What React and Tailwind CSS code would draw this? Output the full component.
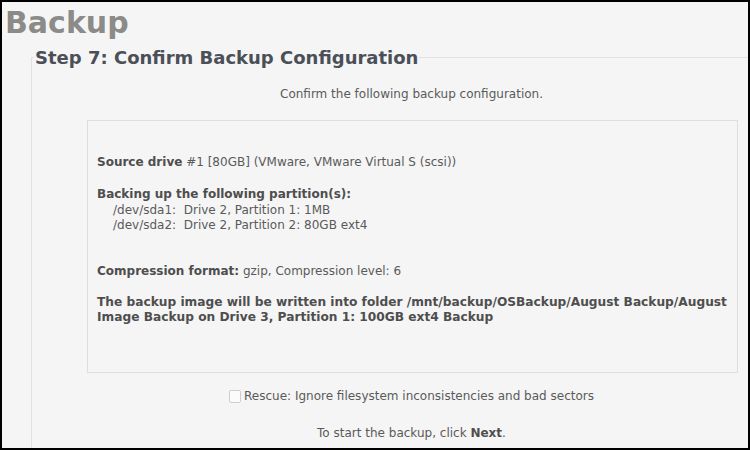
export default function App() {
  const font = { fontFamily: '"DejaVu Sans", Verdana, sans-serif' };
  return (
    <div
      style={font}
      className="w-[750px] h-[450px] overflow-hidden border-2 border-black bg-[#f5f5f5] text-[12px] leading-[15.5px] text-[#5a5a5a]"
    >
      <h1 className="mt-[6px] pl-[3px] text-[30px] leading-[30px] font-bold text-[#8b8b88]">Backup</h1>

      <fieldset className="mt-[11.5px] ml-[29px] w-[760px] h-[600px] border border-r-0 border-[#e2e2e2]">
        <legend className="ml-[2px] px-[1px] text-[18px] font-bold text-[#4b5058]">
          Step 7: Confirm Backup Configuration
        </legend>

        <p className="mt-[21.5px] text-center">Confirm the following backup configuration.</p>

        {/* Summary box */}
        <div className="mt-[18px] ml-[55px] w-[651px] border border-[#dedede] pl-[9px] pt-[34px] pb-[46px]">
          <p>
            <b className="text-[#4e4e4e]">Source drive</b> #1 [80GB] (VMware, VMware Virtual S (scsi))
          </p>

          <p className="mt-[16.5px] font-bold text-[#4e4e4e]">Backing up the following partition(s):</p>
          <p className="pl-[16px] whitespace-pre">/dev/sda1:  Drive 2, Partition 1: 1MB</p>
          <p className="pl-[16px] whitespace-pre">/dev/sda2:  Drive 2, Partition 2: 80GB ext4</p>

          <p className="mt-[30px]">
            <b className="text-[#4e4e4e]">Compression format:</b> gzip, Compression level: 6
          </p>

          <p className="mt-[15.5px] text-[12.2px] font-bold text-[#4e4e4e]">
            The backup image will be written into folder /mnt/backup/OSBackup/August Backup/August
            <br />
            Image Backup on Drive 3, Partition 1: 100GB ext4 Backup
          </p>
        </div>

        <label className="mt-[16px] flex items-center justify-center gap-[3px]">
          <span className="inline-block w-[12px] h-[13px] rounded-[2px] border border-[#cfcfcf] bg-[#fbfbfb]" />
          <span>Rescue: Ignore filesystem inconsistencies and bad sectors</span>
        </label>

        <p className="mt-[21.5px] text-center">
          To start the backup, click <b className="text-[#4e4e4e]">Next</b>.
        </p>
      </fieldset>
    </div>
  );
}
